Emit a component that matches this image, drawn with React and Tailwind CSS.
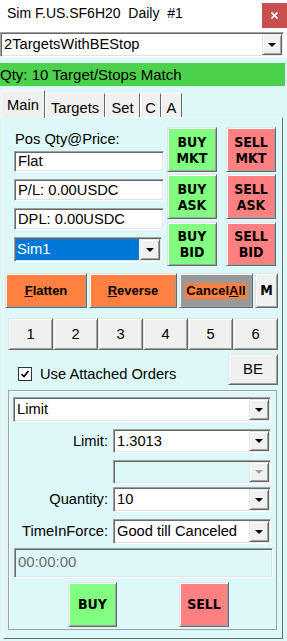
import React from "react";

const raised =
  "border border-t-[#e3e3e3] border-l-[#e3e3e3] border-b-[#696969] border-r-[#696969] shadow-[inset_1px_1px_0_#ffffff,inset_-1px_-1px_0_#a0a0a0]";
const sunken =
  "border border-t-[#a0a0a0] border-l-[#a0a0a0] border-b-white border-r-white shadow-[inset_1px_1px_0_#696969,inset_-1px_-1px_0_#e3e3e3]";
const boldFont = "font-['DejaVu_Sans_Condensed','DejaVu_Sans',sans-serif] font-bold";
const boldFont2 = "font-['Liberation_Sans',Arial,sans-serif] font-bold";

function Arrow({ disabled }) {
  return (
    <div
      className={`w-0 h-0 border-l-[4px] border-r-[4px] border-t-[4px] border-l-transparent border-r-transparent ${
        disabled ? "border-t-[#a0a0a0]" : "border-t-black"
      }`}
    />
  );
}

function Combo({ w, h, text, selected, disabled }) {
  return (
    <div
      className={`${sunken} flex items-stretch p-[1px] ${disabled ? "bg-[#dcf8f8]" : "bg-white"}`}
      style={{ width: w, height: h }}
    >
      <div className="flex-1 flex items-center min-w-0">
        {selected ? (
          <div className="h-full w-full mr-[1px] bg-[#0078d7] text-white text-[14.7px] flex items-center pl-[1px]">
            {text}
          </div>
        ) : (
          <div className="text-[14.7px] pl-[2px] leading-none whitespace-nowrap">{text}</div>
        )}
      </div>
      <div className={`w-[20px] bg-[#f0f0f0] ${raised} flex items-center justify-center`}>
        <Arrow disabled={disabled} />
      </div>
    </div>
  );
}

function TextBox({ h, text }) {
  return (
    <div className={`${sunken} bg-white w-[150px] flex items-center pl-[3px] text-[14.7px]`} style={{ height: h }}>
      {text}
    </div>
  );
}

function ColorBtn({ color, top, bottom, h }) {
  return (
    <div
      className={`${raised} ${color} w-[50px] flex flex-col items-center justify-center ${boldFont} text-[14px] leading-[16px]`}
      style={{ height: h }}
    >
      <span>{top}</span>
      {bottom && <span>{bottom}</span>}
    </div>
  );
}

export default function App() {
  return (
    <div className="w-[287px] h-[641px] bg-[#dcf8f8] font-['Liberation_Sans',Arial,sans-serif] text-black overflow-hidden flex flex-col">
      {/* Title bar */}
      <div className="h-[30px] shrink-0 bg-white flex items-start justify-between">
        <div className="pl-[7px] pt-[5px] text-[14px] leading-[16px] whitespace-pre">
          {"Sim F.US.SF6H20  Daily  #1"}
        </div>
        <div className="mt-[3px] w-[25px] h-[25px] bg-[#c75050] flex items-center justify-center">
          <svg width="7" height="7" viewBox="0 0 7 7">
            <path d="M0.5 0.5 L6.5 6.5 M6.5 0.5 L0.5 6.5" stroke="white" strokeWidth="1.6" />
          </svg>
        </div>
      </div>

      {/* Strategy combo */}
      <div className="h-[28px] shrink-0 bg-white pt-[2px]">
        <Combo w={284} h={25} text="2TargetsWithBEStop" />
      </div>

      {/* Status bar */}
      <div className="mt-[5px] h-[23px] w-[285px] bg-[#4cd14c] text-[15px] leading-[23px] shrink-0">
        Qty: 10 Target/Stops Match
      </div>

      {/* Tabs */}
      <div className="mt-[4px] h-[27px] flex items-end pl-[1px] shrink-0 text-[14.7px]">
        <div className="relative z-10 h-[28px] -mb-[1px] w-[44px] bg-[#f0f0f0] border border-b-0 border-t-white border-l-white border-r-[#696969] flex justify-center pt-[3px]">
          Main
        </div>
        {[
          ["Targets", 60],
          ["Set", 35],
          ["C", 21],
          ["A", 21],
        ].map(([t, w]) => (
          <div
            key={t}
            className="h-[24px] bg-[#f0f0f0] border border-b-0 border-t-white border-l-white border-r-[#696969] flex justify-center pt-[3px]"
            style={{ width: w }}
          >
            {t}
          </div>
        ))}
      </div>

      {/* Main panel */}
      <div className="ml-[3px] w-[280px] h-[522px] border border-t-white border-l-white border-b-[#696969] border-r-[#696969] bg-[#dcf8f8] shrink-0 flex flex-col">
        {/* Top section */}
        <div className="mt-[9px] pl-[10px] flex">
          <div className="w-[150px] flex flex-col">
            <div className="h-[24px] leading-[24px] text-[14.7px] pl-[1px]">Pos Qty@Price:</div>
            <TextBox h={21} text="Flat" />
            <div className="mt-[7px]">
              <TextBox h={22} text="P/L: 0.00USDC" />
            </div>
            <div className="mt-[7px]">
              <TextBox h={22} text="DPL: 0.00USDC" />
            </div>
            <div className="mt-[7px]">
              <Combo w={148} h={25} text="Sim1" selected />
            </div>
          </div>
          <div className="ml-[3px] flex flex-col">
            <ColorBtn color="bg-[#80ff80]" top="BUY" bottom="MKT" h={45} />
            <div className="mt-[2px]">
              <ColorBtn color="bg-[#80ff80]" top="BUY" bottom="ASK" h={45} />
            </div>
            <div className="mt-[3px]">
              <ColorBtn color="bg-[#80ff80]" top="BUY" bottom="BID" h={44} />
            </div>
          </div>
          <div className="ml-[9px] flex flex-col">
            <ColorBtn color="bg-[#ff8080]" top="SELL" bottom="MKT" h={45} />
            <div className="mt-[2px]">
              <ColorBtn color="bg-[#ff8080]" top="SELL" bottom="ASK" h={45} />
            </div>
            <div className="mt-[3px]">
              <ColorBtn color="bg-[#ff8080]" top="SELL" bottom="BID" h={44} />
            </div>
          </div>
        </div>

        {/* Flatten row */}
        <div className={`mt-[7px] ml-[1px] flex gap-[2px] h-[35px] ${boldFont2} text-[13px]`}>
          <div className={`${raised} bg-[#ff8040] w-[82px] flex items-center justify-center`}>
            <span>
              <span className="underline">F</span>latten
            </span>
          </div>
          <div className={`${raised} bg-[#ff8040] w-[88px] flex items-center justify-center`}>
            <span>
              <span className="underline">R</span>everse
            </span>
          </div>
          <div className={`${raised} bg-[#999999] w-[74px] flex items-center justify-center`}>
            <span className="bg-[#ff8040] px-[1px] leading-[16px]">
              Cancel<span className="underline">A</span>ll
            </span>
          </div>
          <div className={`${raised} bg-[#f0f0f0] w-[23px] flex items-center justify-center ${boldFont} text-[14px]`}>M</div>
        </div>

        {/* Number row */}
        <div className="mt-[10px] ml-[4px] flex h-[32px] text-[14.7px]">
          {["1", "2", "3", "4", "5", "6"].map((n) => (
            <div key={n} className={`${raised} bg-[#f0f0f0] w-[45px] flex items-center justify-center`}>
              {n}
            </div>
          ))}
        </div>

        {/* Checkbox + BE */}
        <div className="mt-[4px] flex h-[31px]">
          <div className="ml-[14px] mt-[13px] h-[14px] flex items-center gap-[8px]">
            <div className="w-[14px] h-[14px] bg-white border border-[#333333] flex items-center justify-center">
              <svg width="10" height="10" viewBox="0 0 10 10">
                <path d="M1.5 5 L4 7.5 L8.5 2" fill="none" stroke="black" strokeWidth="1.6" />
              </svg>
            </div>
            <span className="text-[14.7px]">Use Attached Orders</span>
          </div>
          <div className={`${raised} ml-auto mr-[4px] w-[50px] bg-[#f0f0f0] flex items-center justify-center text-[15px]`}>
            BE
          </div>
        </div>

        {/* Group box */}
        <div className="mt-[5px] ml-[4px] w-[269px] h-[240px] border border-[#a0a0a0] shadow-[inset_1px_1px_0_#ffffff] flex flex-col text-[14.7px]">
          <div className="mt-[6px] ml-[4px]">
            <Combo w={258} h={25} text="Limit" />
          </div>
          <div className="mt-[7px] flex items-center">
            <div className="w-[104px] text-right pr-[5px]">Limit:</div>
            <Combo w={158} h={24} text="1.3013" />
          </div>
          <div className="mt-[7px] ml-[104px]">
            <Combo w={158} h={24} text="" disabled />
          </div>
          <div className="mt-[3px] flex items-center">
            <div className="w-[104px] text-right pr-[5px]">Quantity:</div>
            <Combo w={158} h={25} text="10" />
          </div>
          <div className="mt-[7px] flex items-center">
            <div className="w-[104px] text-right pr-[5px] whitespace-nowrap">TimeInForce:</div>
            <Combo w={158} h={25} text="Good till Canceled" />
          </div>
          <div className={`mt-[4px] ml-[5px] w-[259px] h-[30px] ${sunken} bg-[#dcf8f8] text-[#6d6d6d] text-[15px] pl-[3px] pt-[5px] leading-[16px]`}>
            00:00:00
          </div>
          <div className="mt-[4px] flex">
            <div className={`${raised} ml-[59px] w-[49px] h-[45px] bg-[#80ff80] flex items-center justify-center ${boldFont} text-[14px]`}>
              BUY
            </div>
            <div className={`${raised} ml-[62px] w-[50px] h-[45px] bg-[#ff8080] flex items-center justify-center ${boldFont} text-[14px]`}>
              SELL
            </div>
          </div>
        </div>
      </div>
    </div>
  );
}
